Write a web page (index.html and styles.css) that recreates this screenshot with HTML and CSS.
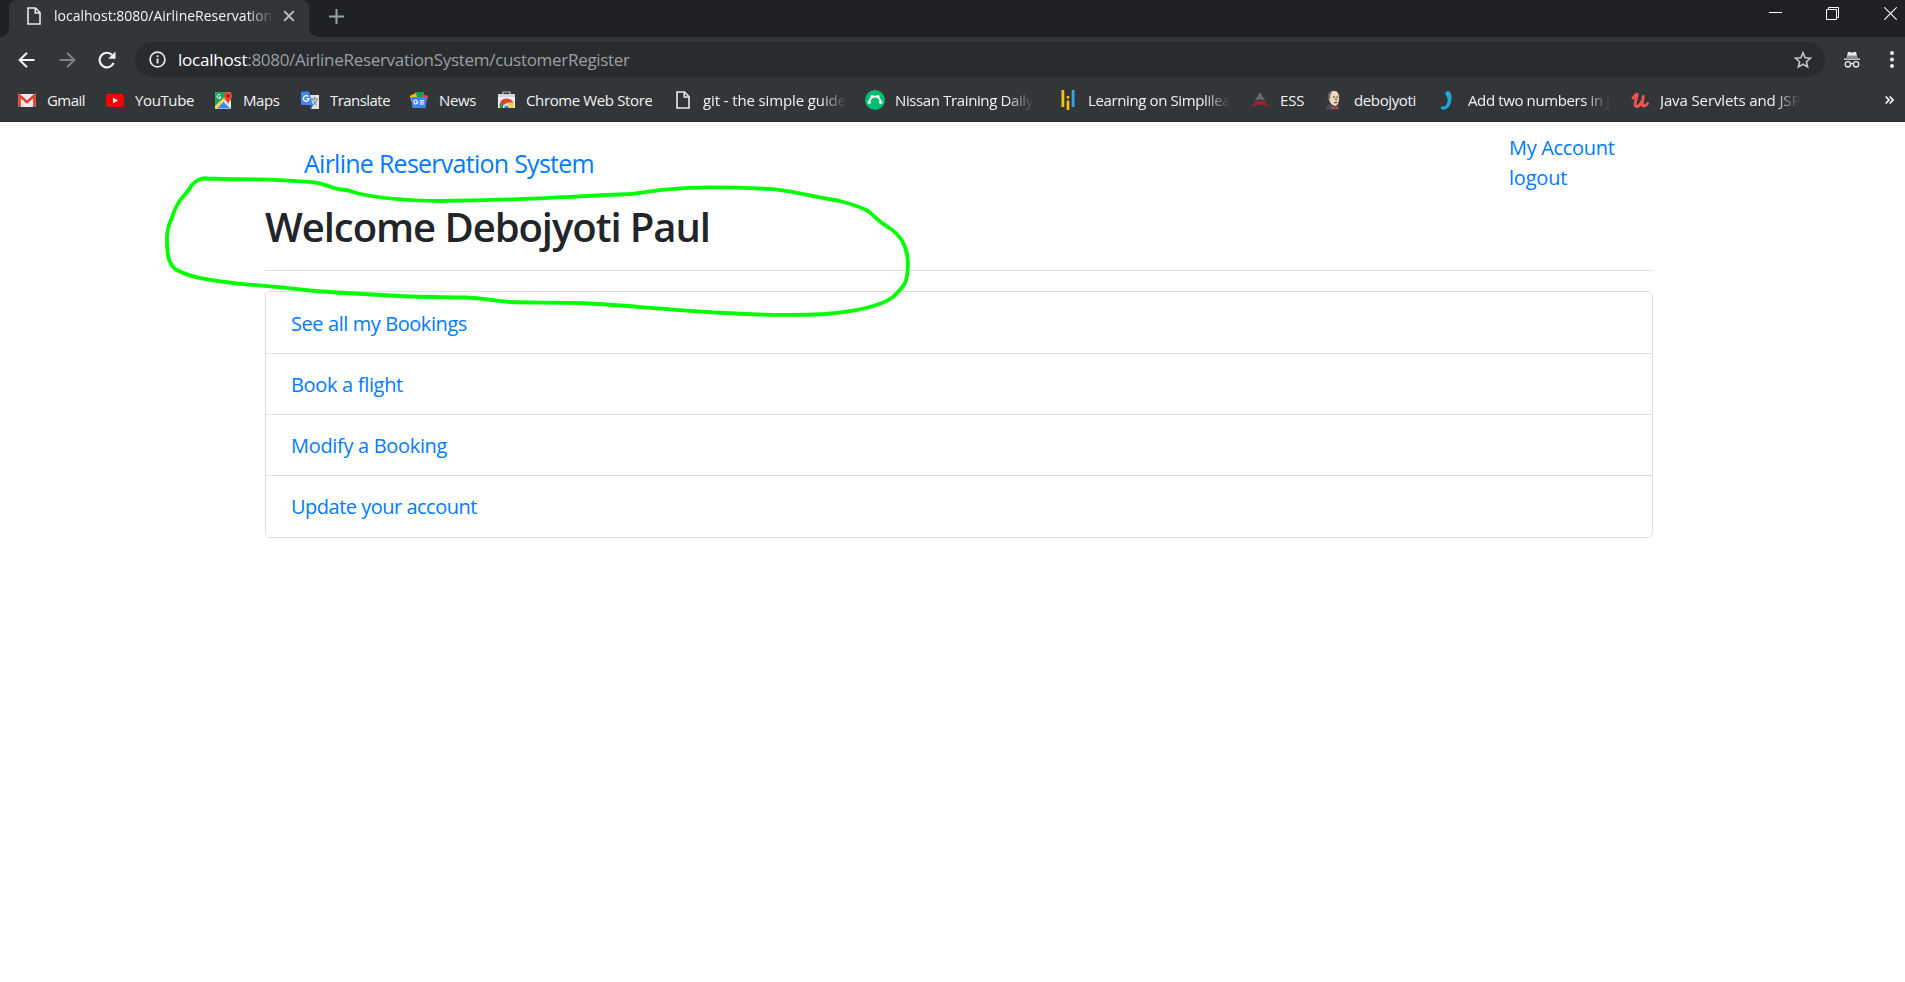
FILE: index.html
```
<!DOCTYPE html>
<html lang="en">
<head>
<meta charset="utf-8">
<title>Airline Reservation System</title>
<link rel="stylesheet" href="styles.css">
</head>
<body>
<header class="browser">
  <div class="tabstrip">
    <div class="tab">
      <svg class="tab-doc" width="14" height="18" viewBox="0 0 14 18" fill="none" stroke="#e8eaed" stroke-width="1.6"><path d="M1 1h7.5L13 5.500V17H1zM8.300 1v5H13"/></svg>
      <span class="tab-title fade">localhost:8080/AirlineReservation</span>
      <svg class="tab-close" width="12" height="12" viewBox="0 0 12 12" stroke="#c4c7ca" stroke-width="1.7"><path d="M1.200 1.200l9.600 9.600M10.800 1.200l-9.600 9.600"/></svg>
    </div>
    <svg class="newtab" width="15" height="15" viewBox="0 0 15 15" stroke="#9aa0a6" stroke-width="2"><path d="M7.500 0v15M0 7.500h15"/></svg>
    <div class="window-controls">
      <svg width="13" height="13" viewBox="0 0 13 13" stroke="#fff"><path d="M0 5.500h13"/></svg>
      <svg width="13" height="13" viewBox="0 0 13 13" fill="none" stroke="#fff"><path d="M.5 2.500h10v10H.5zM2.500 2.500v-2h10v10h-2"/></svg>
      <svg width="13" height="13" viewBox="0 0 13 13" stroke="#fff" stroke-width="1.100"><path d="M.3.300l12.400 12.400M12.700.300L.3 12.700"/></svg>
    </div>
  </div>
  <div class="toolbar">
    <svg class="back" width="17" height="16" viewBox="0 0 17 16" fill="none" stroke="#f1f3f4" stroke-width="2"><path d="M16.500 8H2M9 .8L1.600 8 9 15.200"/></svg>
    <svg class="forward" width="17" height="16" viewBox="0 0 17 16" fill="none" stroke="#7f8285" stroke-width="2"><path d="M.5 8H15M8 .8L15.400 8 8 15.200"/></svg>
    <svg class="reload" width="18" height="18" viewBox="0 0 18 18"><path d="M15.600 12A7.300 7.300 0 1 1 14.200 4" fill="none" stroke="#f1f3f4" stroke-width="2.200"/><path d="M17.500.5v7.300h-7.300z" fill="#f1f3f4"/></svg>
    <div class="omnibox">
      <svg width="17" height="17" viewBox="0 0 17 17"><circle cx="8.500" cy="8.500" r="7.400" fill="none" stroke="#e8eaed" stroke-width="1.700"/><path d="M7.600 4.300h1.900v1.800H7.600zM7.600 7.500h1.900v5H7.600z" fill="#e8eaed"/></svg>
      <span class="url"><span class="host">localhost</span><span class="path">:8080/AirlineReservationSystem/customerRegister</span></span>
      <svg class="star" width="18" height="18" viewBox="0 0 18 18" fill="none" stroke="#c4c7ca" stroke-width="1.600"><path d="M9 1.800l2.100 4.900 5.400.5-4.100 3.500 1.200 5.200L9 13.200l-4.600 2.700 1.200-5.200L1.500 7.200l5.400-.5z"/></svg>
    </div>
    <svg class="incognito" width="18" height="16" viewBox="0 0 18 16"><path d="M5 0h2.200l1.800.7L10.800 0H13l1 3.700H4zM3.600 4.500h10.800v1H3.600zM1 6.400h16v1.300H1z" fill="#e8eaed"/><g fill="none" stroke="#e8eaed" stroke-width="1.300"><circle cx="4.900" cy="12.300" r="2.700"/><circle cx="13.100" cy="12.300" r="2.700"/><path d="M7.600 12q1.400-1 2.800 0"/></g></svg>
    <svg class="menu" width="4" height="17" viewBox="0 0 4 17" fill="#f1f3f4"><circle cx="2" cy="2" r="1.950"/><circle cx="2" cy="8.500" r="1.950"/><circle cx="2" cy="15" r="1.950"/></svg>
  </div>
  <nav class="bookmarks">
    <a class="bookmark"><svg viewBox="0 0 20 20"><path d="M1 4h18v13H1z" fill="#ececec"/><path d="M4 17l4-5M16 17l-4-5" stroke="#cfcfcf"/><path d="M2.500 17V5.500L10 12l7.500-6.500V17" fill="none" stroke="#dc4638" stroke-width="2.800"/></svg><span class="t-tight">Gmail</span></a>
    <a class="bookmark"><svg viewBox="0 0 20 20"><rect x="1" y="4" width="18" height="13" rx="3" fill="#f00"/><path d="M8 7.800l5 2.700-5 2.700z" fill="#fff"/></svg><span>YouTube</span></a>
    <a class="bookmark"><svg viewBox="0 0 20 20"><rect x="2" y="2" width="16" height="17" rx="1.500" fill="#e4e8ea"/><path d="M2 3.500V17L14 5V2H3.500z" fill="#1ea45e"/><path d="M3 18.500L10 11.500l7.500 7H3z" fill="#4285f4"/><path d="M2 16L14 4.500l2 2L3.500 19H2z" fill="#ffd54a"/><path d="M15 14.500c0-3-4-4.500-4-8.500a4 4 0 0 1 8 0c0 4-4 5.500-4 8.500z" fill="#ea4335"/><circle cx="15" cy="6" r="1.500" fill="#811411"/><path d="M7.400 5A2 2 0 1 0 8 7H6" fill="none" stroke="#fff"/></svg><span>Maps</span></a>
    <a class="bookmark"><svg viewBox="0 0 20 20"><path d="M8 5h11v14h-8z" fill="#dfe2e5"/><path d="M11 9h7M14.500 7v2M12.500 9.500l4 6M17 9.500q-1 4-4 5.500" stroke="#6f7f89" fill="none"/><path d="M2 1.500h7L13 15H2q-1 0-1-1V2.500q0-1 1-1z" fill="#4285f4"/><path d="M9 15h4l-1.500 3.800z" fill="#3050b8"/><path d="M8.200 6.500A2.800 2.800 0 1 0 9 8.700H6.300" fill="none" stroke="#fff" stroke-width="1.300"/></svg><span class="t-tight">Translate</span></a>
    <a class="bookmark"><svg viewBox="0 0 20 20"><path d="M6 2h9v5H6z" fill="#0f9d58"/><path d="M.8 6l6-3 2 6-6 3z" fill="#fbbc04"/><path d="M19.200 6l-6-2-2 6 6 2z" fill="#ea4335"/><path d="M2.300 7h15.400l-.9 10q0 1-1 1H4.200q-1 0-1-1z" fill="#4285f4"/><path d="M8.200 10.500A2 2 0 1 0 8.800 12H7" fill="none" stroke="#fff" stroke-width="1.100"/><path d="M11 10.500h4M11 12.200h4M11 14h4" stroke="#fff"/></svg><span>News</span></a>
    <a class="bookmark"><svg viewBox="0 0 20 20"><path d="M7 4V2h7v2" fill="none" stroke="#b9bcbf" stroke-width="1.200"/><path d="M2 4h17v14H2z" fill="#eee"/><path d="M2 4h17v3H2z" fill="#d2d4d6"/><path d="M4 18q-1.500-9.500 6.500-9.500 5 0 7 4.500h-7z" fill="#db4437"/><path d="M4.200 12.500L8 18H4q-1-3 .2-5.500z" fill="#0f9d58"/><path d="M11 12.500h6.300q1 2.500 0 5.500H11z" fill="#ffcd40"/><path d="M7 18a3.500 3.500 0 1 1 7 0z" fill="#eee"/><path d="M8 18a2.500 2.500 0 1 1 5 0z" fill="#4285f4"/></svg><span>Chrome Web Store</span></a>
    <a class="bookmark"><svg viewBox="0 0 20 20" fill="none" stroke="#e8eaed" stroke-width="1.600"><path d="M4 2h7.500L16 6.500V18H4zM11.300 2v5H16"/></svg><span class="fade t-wide">git - the simple guide</span></a>
    <a class="bookmark"><svg viewBox="0 0 20 20"><circle cx="10" cy="10" r="10" fill="#00bf6f"/><path d="M4.500 12a5.500 5.500 0 0 1 11 0" fill="none" stroke="#fff" stroke-width="1.800"/><g fill="#fff"><circle cx="4.300" cy="12.200" r="1.700"/><circle cx="15.700" cy="12.200" r="1.700"/><circle cx="7" cy="6.500" r="1.600"/><circle cx="13" cy="6.500" r="1.600"/></g></svg><span class="fade">Nissan Training Daily</span></a>
    <a class="bookmark"><svg viewBox="0 0 20 20"><path d="M3.500 0h2.800v17H3.500zM8.700 10.500h2.600V20H8.700zM8.700 6h2.600v2.500H8.700z" fill="#ffc20e"/><path d="M13.700 0h2.800v17h-2.800z" fill="#37a6e6"/></svg><span class="fade">Learning on Simplilea</span></a>
    <a class="bookmark"><svg viewBox="0 0 20 20"><path d="M10 2l5 8.500q-5-2-10 0z" fill="#696b6e"/><path d="M1 17.500L4.500 12q5.500-2.500 11 0l4 5.500q-9-6-18.500 0z" fill="#9c2429"/></svg><span class="t-wide">ESS</span></a>
    <a class="bookmark"><svg viewBox="0 0 20 20"><path d="M2 19.500q0-5 4-5.500l5 2 4.500 1v2.500z" fill="#355268"/><path d="M4 8q-1-7 5.500-7.500Q15.500 0 15.500 8q0 7-4 8.500Q6 16 4 8z" fill="#f0d6b7" stroke="#302b28" stroke-width=".8"/><path d="M4.300 10Q2 2.500 8 1 6 4 6 9z" fill="#6d6357"/><path d="M9 7h2M12.500 7h1.500M10 12.500q2 1 3.500-.5M12 8v2.500" stroke="#443a34" fill="none"/><path d="M7.500 16l3.500 1.500 3-1.500v3.500l-3-1-3.500 1.500z" fill="#d33833"/></svg><span>debojyoti</span></a>
    <a class="bookmark"><svg viewBox="0 0 20 20"><path d="M7.500 2.500C9 0 12 .5 13 4c1.500 6-.5 12.500-4.500 14.800-3 1.700-6 .7-5.800-1.200C3 15.500 5.500 17 7 16c3-2 3.300-7 1.500-10Q6.800 4 7.500 2.500z" fill="#1ba8dc"/></svg><span class="fade">Add two numbers in J</span></a>
    <a class="bookmark"><svg viewBox="0 0 20 20"><path d="M3 8C6 5 7.500 2.500 7 5.500 6.500 9 3 16.500 7 16.500c3 0 6-6 6.300-10-1.500 7-1.500 10 1 9.500q1.800-.4 3.200-2.500" fill="none" stroke="#ec5252" stroke-width="3" stroke-linecap="round" stroke-linejoin="round"/></svg><span class="fade t-wide">Java Servlets and JSP</span></a>
    <svg class="more" viewBox="0 0 9 8" width="9" height="8" fill="none" stroke="#f1f3f4" stroke-width="1.700"><path d="M.7.500L4 4 .7 7.500M4.700.500L8 4 4.700 7.500"/></svg>
  </nav>
</header>
<main class="container">
  <div class="masthead">
    <a class="brand">Airline Reservation System</a>
    <div class="account"><a class="acct">My Account</a><a class="logout">logout</a></div>
  </div>
  <h1 class="welcome">Welcome Debojyoti Paul</h1>
  <hr class="rule">
  <ul class="list">
    <li><a>See all my Bookings</a></li>
    <li><a class="l-wide">Book a flight</a></li>
    <li><a class="l-wide">Modify a Booking</a></li>
    <li><a class="l-tight">Update your account</a></li>
  </ul>
</main>
<svg class="marker" width="780" height="150" viewBox="150 170 780 150"><path d="M203 178.500C220 179 240 179.500 261 179.300C285 180 305 182 314 182.300C326 184 334 189 341 189.500C349 189.500 351 191 358 193.500C382 199 405 200.500 440 201C520 200.500 560 197 630 194C652 191.500 665 188.500 690 187.800C715 187 750 188 775 189.300C800 192 810 196.500 838 200.500C853 204.500 863 208 868 211C875 216 876 220 888 227C899 234 908 244 908 266C907 284 905 285 893 297C878 308 850 312 825 314C790 316 760 315 725 313C660 309 620 305 590 303.500C560 302 530 303 510 302C493 301 486 298 465 297.500C440 297 425 297.500 400 296C360 294 340 293 310 290.500C280 287 255 285 237 283.500C210 280 190 278 175 269C168 262 167 255 167 238C167 225 172 219 174 212C181 194 188 194 191 186Q198 178 206 178.500"/></svg>
</body>
</html>
```
FILE: styles.css
```
* { box-sizing: border-box; }
body {
  margin: 0;
  height: 982px;
  overflow: hidden;
  position: relative;
  background: #fff;
  color: #212529;
  font-family: "Open Sans", "Noto Sans", sans-serif;
}
svg { display: block; flex: none; }

/* Browser frame */
.browser { height: 122px; background: #323639; border-bottom: 1px solid #242628; }
.tabstrip { height: 37px; background: #202124; display: flex; padding-left: 9px; }
.tab {
  width: 300px;
  background: #323639;
  border-radius: 8px 8px 0 0;
  display: flex;
  align-items: center;
  padding: 0 14px 5px 18px;
  position: relative;
}
.tab::before, .tab::after {
  content: "";
  position: absolute;
  bottom: 0;
  width: 9px;
  height: 9px;
}
.tab::before { left: -9px; background: radial-gradient(circle at 0 0, #202124 8.5px, #323639 9px); }
.tab::after { right: -9px; background: radial-gradient(circle at 100% 0, #202124 8.5px, #323639 9px); }
.tab-title { margin-left: 13px; margin-bottom: 2px; width: 220px; font-size: 14px; color: #f1f3f4; white-space: nowrap; overflow: hidden; }
.tab-close { margin-left: auto; }
.fade {
  -webkit-mask-image: linear-gradient(to right, #000 calc(100% - 26px), transparent);
  mask-image: linear-gradient(to right, #000 calc(100% - 26px), transparent);
}
.newtab { margin: 9px 0 0 20px; }
.window-controls { margin: 7px 8px 0 auto; display: flex; gap: 44px; }
.window-controls svg:last-child { margin-left: 1px; }

.toolbar { height: 45px; display: flex; align-items: center; padding: 0 10px 0 18px; }
.forward { margin-left: 24px; }
.reload { margin-left: 22px; }
.omnibox {
  margin-left: 19px;
  width: 1690px;
  height: 35px;
  border-radius: 18px;
  background: #282c2f;
  display: flex;
  align-items: center;
  padding: 0 13px 0 14px;
}
.url { margin-left: 12px; font-size: 17px; line-height: 24px; white-space: nowrap; color: #9aa0a6; }
.host { color: #fff; letter-spacing: -.22px; }
.path { letter-spacing: -.3px; }
.star { margin-left: auto; }
.incognito { margin-left: 18px; }
.menu { margin-left: auto; margin-right: 1px; }

.bookmarks {
  height: 36px;
  padding-left: 17px;
  padding-right: 11px;
  display: grid;
  grid-template-columns: 88px 108px 87px 109px 87px 177px 192px 193px 192px 74px 114px 192px 184px 1fr;
  align-items: center;
}
.bookmark {
  display: flex;
  align-items: center;
  gap: 10px;
  height: 36px;
  color: #f1f3f4;
  font-size: 15px;
  line-height: 20px;
  letter-spacing: -.38px;
  white-space: nowrap;
}
.bookmark svg { width: 20px; height: 20px; }
.bookmark span { max-width: 143px; overflow: hidden; margin-bottom: 1px; }
.bookmark .t-tight { letter-spacing: -.55px; }
.bookmark .t-wide { letter-spacing: -.12px; }
.more { justify-self: end; }

/* Page */
.container { width: 1388px; margin-left: 265px; }
.container a { color: #007bff; }
.masthead { height: 81px; display: flex; justify-content: space-between; padding-left: 39px; }
.brand { margin-top: 22px; font-size: 25px; line-height: 38px; letter-spacing: -.74px; }
.account {
  width: 144px;
  margin-top: 11px;
  display: flex;
  flex-direction: column;
  font-size: 20px;
  line-height: 30px;
}
.acct { letter-spacing: -.32px; }
.logout { letter-spacing: -.2px; }
.welcome { margin: 0; font-size: 40px; line-height: 48px; font-weight: 600; letter-spacing: -1.060px; }
.rule { margin: 19px 0 20px; border: 0; height: 1px; background: #e2e2e2; }
.list {
  list-style: none;
  margin: 0;
  padding: 0;
  border: 1px solid #dfdfdf;
  border-radius: 5px;
  font-size: 20px;
  line-height: 30px;
  letter-spacing: -.42px;
}
.list li { height: 61px; padding: 16px 25px 0; border-bottom: 1px solid #dfdfdf; }
.list li:first-child { height: 62px; padding-top: 17px; }
.list li:last-child { border-bottom: 0; }
.list .l-wide { letter-spacing: -.32px; }
.list .l-tight { letter-spacing: -.5px; }

/* Freehand highlight around the greeting */
.marker {
  position: absolute;
  left: 150px;
  top: 170px;
  fill: none;
  stroke: #0f0;
  stroke-width: 3.800px;
  stroke-linecap: round;
  pointer-events: none;
}
```
